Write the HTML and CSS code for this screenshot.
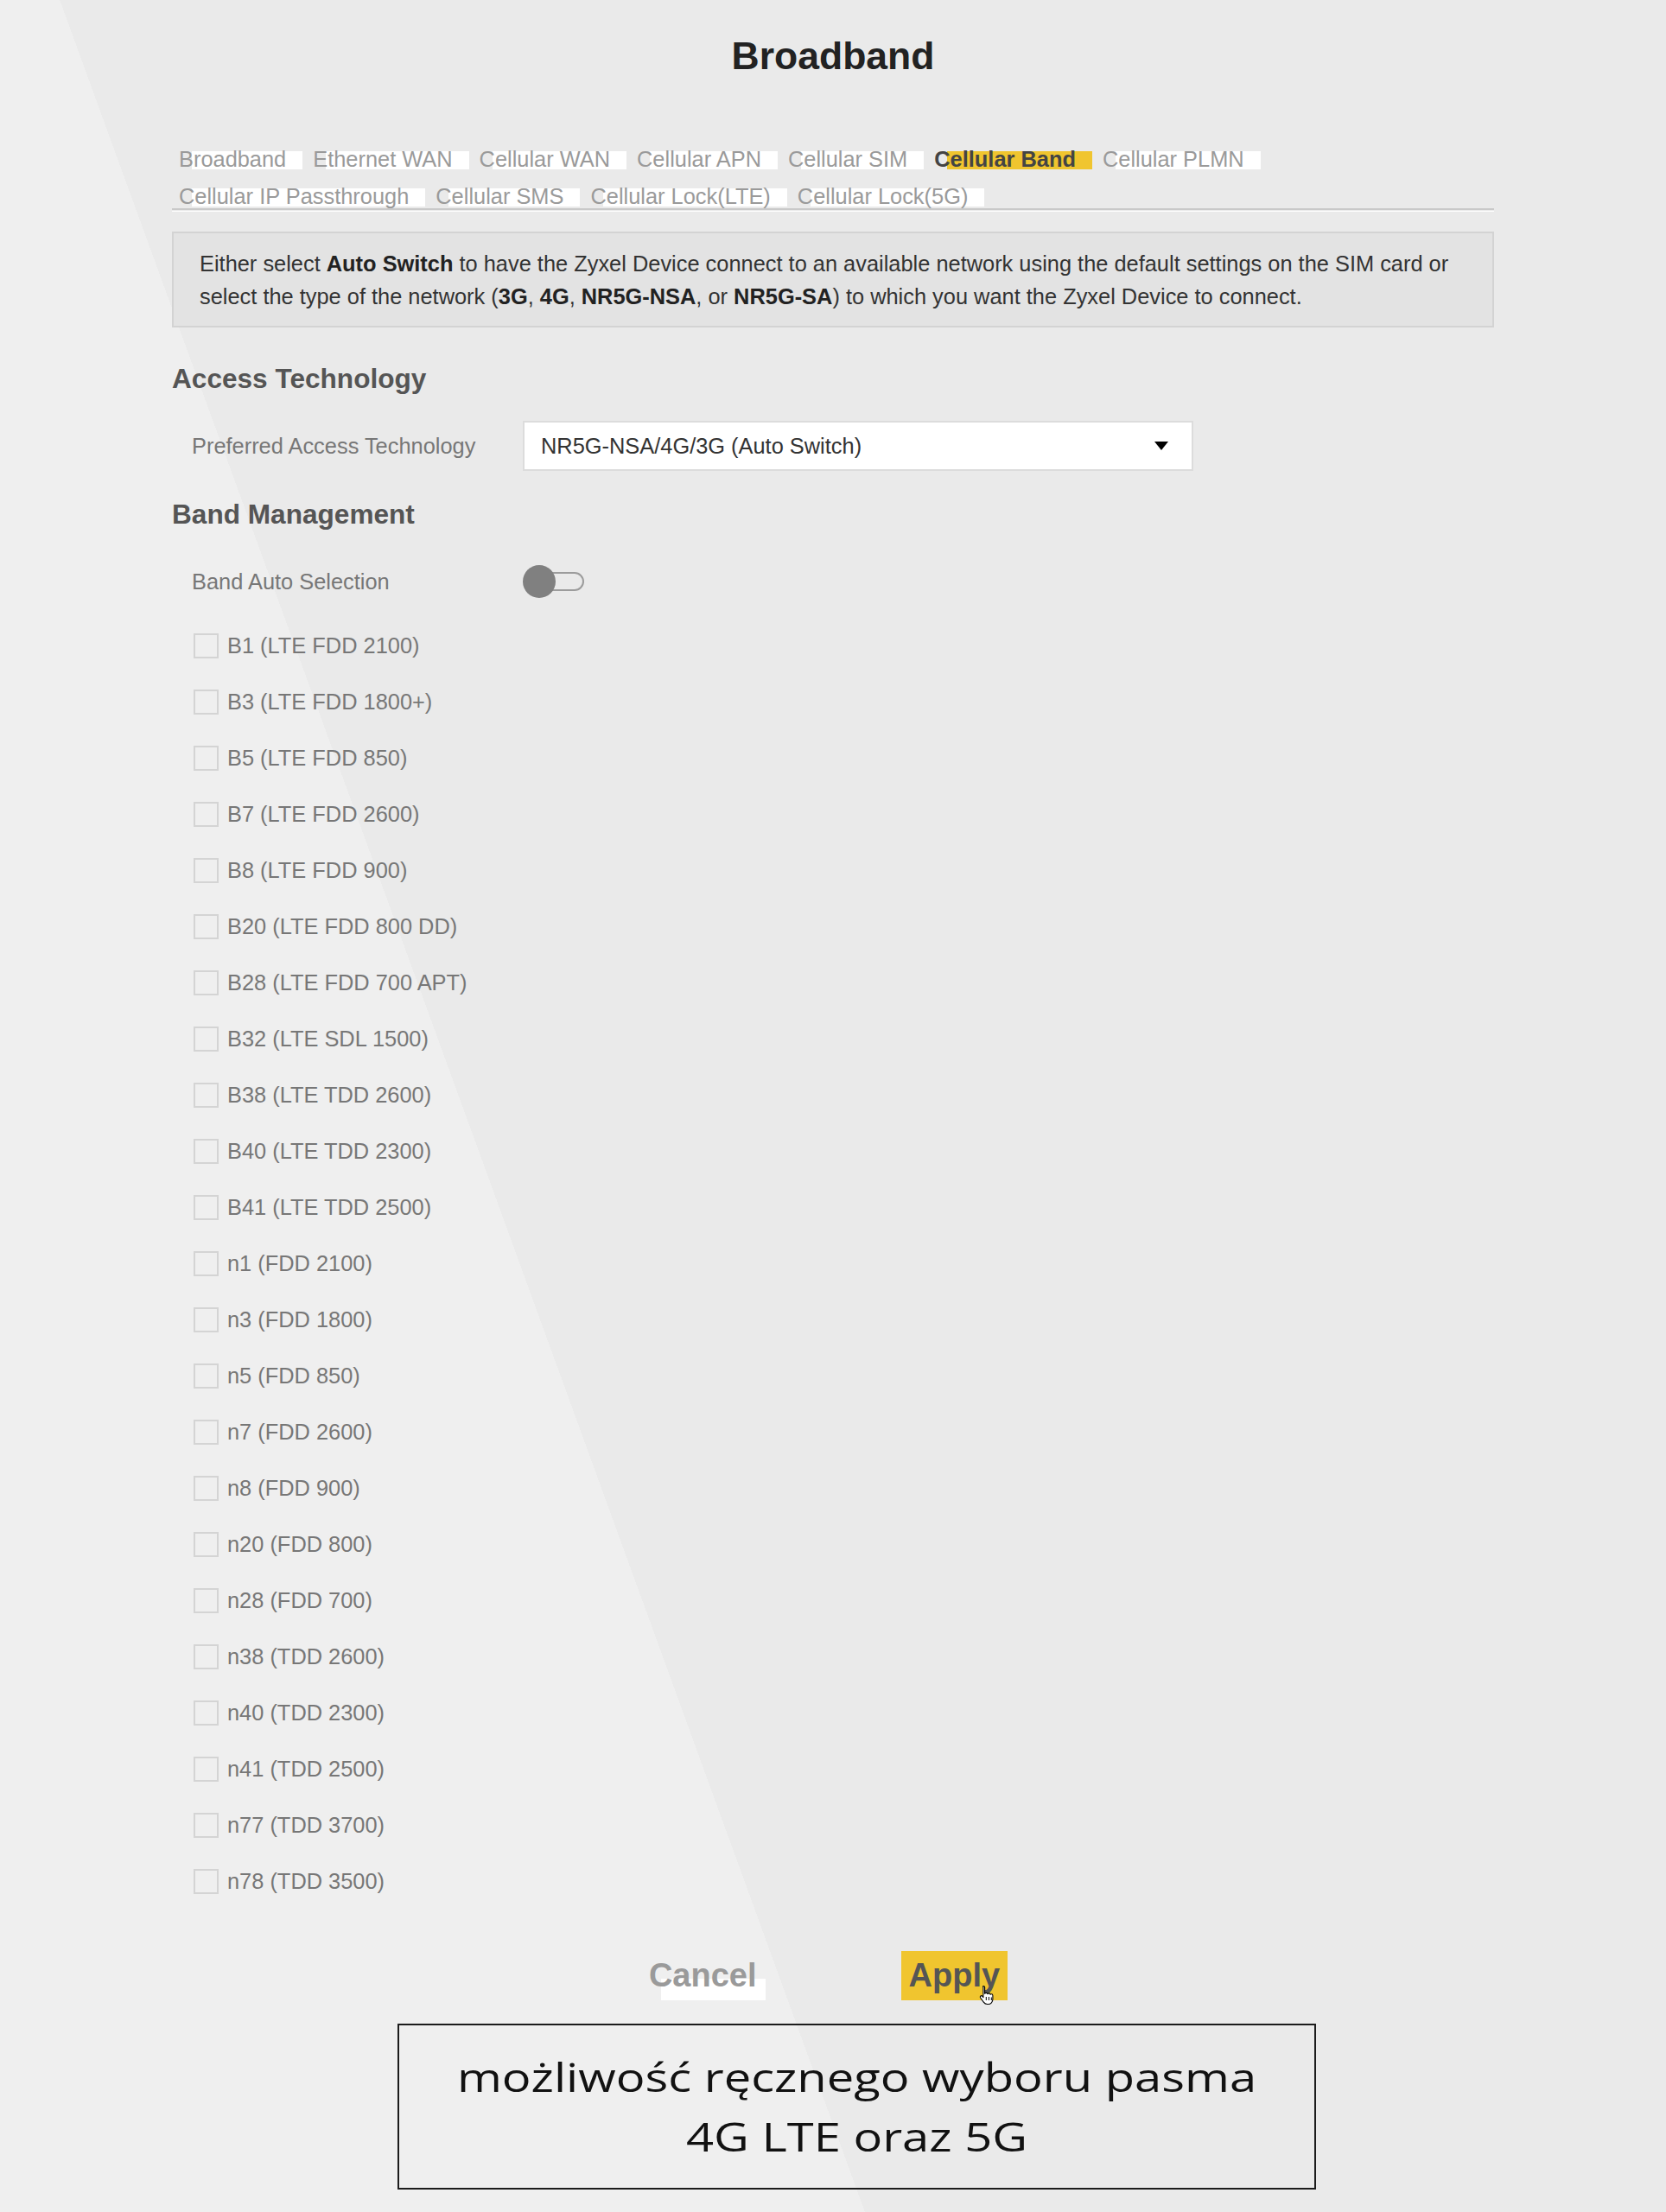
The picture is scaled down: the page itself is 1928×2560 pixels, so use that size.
FILE: index.html
```html
<!DOCTYPE html>
<html lang="en">
<head>
  <meta charset="UTF-8">
  <title>Broadband - Cellular Band</title>
  <link rel="stylesheet" href="styles.css">
</head>
<body>
  <div class="page">
    <h1 class="page-title">Broadband</h1>

    <!-- Sub menu -->
    <div class="tabs-wrap">
      <nav class="tabs">
        <a class="tab">Broadband</a>
        <a class="tab">Ethernet WAN</a>
        <a class="tab">Cellular WAN</a>
        <a class="tab">Cellular APN</a>
        <a class="tab">Cellular SIM</a>
        <a class="tab tab--active">Cellular Band</a>
        <a class="tab">Cellular PLMN</a>
        <a class="tab">Cellular IP Passthrough</a>
        <a class="tab">Cellular SMS</a>
        <a class="tab">Cellular Lock(LTE)</a>
        <a class="tab">Cellular Lock(5G)</a>
      </nav>
    </div>

    <p class="info">Either select <b>Auto Switch</b> to have the Zyxel Device connect to an available network using the default settings on the SIM card or select the type of the network (<b>3G</b>, <b>4G</b>, <b>NR5G-NSA</b>, or <b>NR5G-SA</b>) to which you want the Zyxel Device to connect.</p>

    <h2 class="section-title section-title--first">Access Technology</h2>
    <div class="field">
      <label class="field__label">Preferred Access Technology</label>
      <div class="select">
        <span>NR5G-NSA/4G/3G (Auto Switch)</span>
        <span class="select__arrow"></span>
      </div>
    </div>

    <h2 class="section-title">Band Management</h2>
    <div class="field field--toggle">
      <label class="field__label">Band Auto Selection</label>
      <div class="toggle">
        <span class="toggle__track"></span>
        <span class="toggle__knob"></span>
      </div>
    </div>

    <ul class="bands">
      <li class="band"><input type="checkbox"><span>B1 (LTE FDD 2100)</span></li>
      <li class="band"><input type="checkbox"><span>B3 (LTE FDD 1800+)</span></li>
      <li class="band"><input type="checkbox"><span>B5 (LTE FDD 850)</span></li>
      <li class="band"><input type="checkbox"><span>B7 (LTE FDD 2600)</span></li>
      <li class="band"><input type="checkbox"><span>B8 (LTE FDD 900)</span></li>
      <li class="band"><input type="checkbox"><span>B20 (LTE FDD 800 DD)</span></li>
      <li class="band"><input type="checkbox"><span>B28 (LTE FDD 700 APT)</span></li>
      <li class="band"><input type="checkbox"><span>B32 (LTE SDL 1500)</span></li>
      <li class="band"><input type="checkbox"><span>B38 (LTE TDD 2600)</span></li>
      <li class="band"><input type="checkbox"><span>B40 (LTE TDD 2300)</span></li>
      <li class="band"><input type="checkbox"><span>B41 (LTE TDD 2500)</span></li>
      <li class="band"><input type="checkbox"><span>n1 (FDD 2100)</span></li>
      <li class="band"><input type="checkbox"><span>n3 (FDD 1800)</span></li>
      <li class="band"><input type="checkbox"><span>n5 (FDD 850)</span></li>
      <li class="band"><input type="checkbox"><span>n7 (FDD 2600)</span></li>
      <li class="band"><input type="checkbox"><span>n8 (FDD 900)</span></li>
      <li class="band"><input type="checkbox"><span>n20 (FDD 800)</span></li>
      <li class="band"><input type="checkbox"><span>n28 (FDD 700)</span></li>
      <li class="band"><input type="checkbox"><span>n38 (TDD 2600)</span></li>
      <li class="band"><input type="checkbox"><span>n40 (TDD 2300)</span></li>
      <li class="band"><input type="checkbox"><span>n41 (TDD 2500)</span></li>
      <li class="band"><input type="checkbox"><span>n77 (TDD 3700)</span></li>
      <li class="band"><input type="checkbox"><span>n78 (TDD 3500)</span></li>
    </ul>

    <div class="actions">
      <button class="btn btn--cancel">Cancel</button>
      <button class="btn btn--apply">Apply
        <svg class="cursor" width="18" height="24" viewBox="0 0 18 24">
          <path d="M5 1.5c1 0 1.6.7 1.6 1.6v7.2c.4-.6 1-.9 1.7-.9.9 0 1.5.6 1.6 1.3.3-.5.9-.8 1.5-.8.9 0 1.5.6 1.6 1.4.3-.4.8-.6 1.3-.6 1 0 1.6.8 1.6 1.8v4.3c0 3.1-2.2 5.7-5.4 5.7H9.6c-2 0-3.3-.9-4.3-2.4L1.6 15c-.5-.8-.3-1.7.4-2.1.7-.4 1.5-.2 2 .5l.9 1.3V3.1C4.9 2.2 4.1 1.5 5 1.5z" fill="#fff" stroke="#000" stroke-width="1.1" stroke-linejoin="round"/>
          <path d="M8.3 14v4M11.4 14v4M14.3 14.5v3.5" stroke="#000" stroke-width="1" fill="none"/>
        </svg>
      </button>
    </div>

    <div class="caption">
      <span class="caption__line">możliwość ręcznego wyboru pasma</span>
      <span class="caption__line">4G LTE oraz 5G</span>
    </div>
  </div>
</body>
</html>
```

FILE: styles.css
```css
* {
  margin: 0;
  padding: 0;
  box-sizing: border-box;
}

html {
  min-height: 100%;
  background-color: #ebebeb;
  background-image: linear-gradient(70deg, #efefef 35%, #eaeaea 35%);
}

body {
  font-family: "Liberation Sans", Arial, sans-serif;
  font-size: 25.4px;
  color: #333;
}

.page {
  width: 1530px;
  margin: 0 auto;
}

.page-title {
  padding-top: 38px;
  font-size: 44.5px;
  line-height: 53px;
  font-weight: bold;
  color: #222;
  text-align: center;
}

/* Sub menu */
.tabs-wrap {
  margin-top: 81px;
  padding-bottom: 1px;
  border-bottom: 1px solid #fff;
}

.tabs {
  display: flex;
  flex-wrap: wrap;
  row-gap: 19px;
  padding: 0 0 2px 8px;
  border-bottom: 2px solid #c9c9c9;
  isolation: isolate;
}

.tab {
  position: relative;
  margin-right: 12px;
  padding-right: 19px;
  line-height: 24px;
  color: #9a9a9a;
  cursor: pointer;
}

.tab::before {
  content: "";
  position: absolute;
  left: 15px;
  right: 0;
  top: 3px;
  bottom: 0;
  background: #fff;
  z-index: -1;
}

.tab--active {
  font-weight: bold;
  color: #444;
}

.tab--active::before {
  background: #f0c52f;
}

.info {
  margin-top: 23px;
  padding: 15.5px 30px;
  border: 2px solid #d3d3d3;
  background: #e3e3e3;
  line-height: 38px;
  color: #333;
}

.info b {
  color: #222;
}

.section-title {
  margin-top: 31.5px;
  font-size: 31.6px;
  line-height: 37px;
  font-weight: bold;
  color: #555;
}

.section-title--first {
  margin-top: 40.5px;
}

.field {
  display: flex;
  align-items: center;
  margin-top: 30.5px;
  padding-left: 23px;
}

.field--toggle {
  margin-top: 40.5px;
}

.field__label {
  width: 383px;
  color: #777;
}

.select {
  display: flex;
  align-items: center;
  justify-content: space-between;
  width: 776px;
  height: 58px;
  padding: 0 27px 0 19px;
  border: 2px solid #dcdcdc;
  background: #fff;
  color: #333;
}

.select__arrow {
  width: 0;
  height: 0;
  border-left: 8px solid transparent;
  border-right: 8px solid transparent;
  border-top: 10px solid #000;
}

.toggle {
  position: relative;
  width: 71px;
  height: 38px;
  display: flex;
  align-items: center;
}

.toggle__track {
  width: 61px;
  height: 22px;
  margin-left: 10px;
  border: 2px solid #9c9c9c;
  border-radius: 11px;
}

.toggle__knob {
  position: absolute;
  left: 0;
  top: 0;
  width: 38px;
  height: 38px;
  border-radius: 50%;
  background: #808080;
}

.bands {
  list-style: none;
  margin-top: 22.5px;
  padding-left: 25px;
}

.band {
  display: flex;
  align-items: center;
  height: 65px;
  color: #777;
}

.band input {
  appearance: none;
  width: 29px;
  height: 29px;
  margin-right: 10px;
  border: 2px solid #d4d4d4;
  background: transparent;
}

.actions {
  display: flex;
  justify-content: center;
  gap: 157px;
  margin-top: 48.5px;
  padding-right: 21px;
}

.btn {
  position: relative;
  height: 57px;
  border: none;
  background: none;
  font-family: inherit;
  font-size: 38px;
  font-weight: bold;
  cursor: pointer;
  isolation: isolate;
}

.btn--cancel {
  padding: 0 10px;
  color: #9a9a9a;
}

.btn--cancel::before {
  content: "";
  position: absolute;
  left: 24px;
  right: 0;
  top: 32px;
  bottom: 0;
  background: #fff;
  z-index: -1;
}

.btn--apply {
  padding: 0 9px;
  background: #f0c52f;
  color: #555;
}

.cursor {
  position: absolute;
  left: 90px;
  top: 39px;
}

.caption {
  width: 1063px;
  height: 192px;
  margin: 27px 0 0 261px;
  border: 2px solid #1c1c1c;
  padding-top: 25px;
  font-family: "Open Sans", "Noto Sans", sans-serif;
  font-size: 46px;
  line-height: 69px;
  color: #111;
  text-align: center;
}

.caption__line {
  display: block;
  transform: scaleX(1.22);
}
```
